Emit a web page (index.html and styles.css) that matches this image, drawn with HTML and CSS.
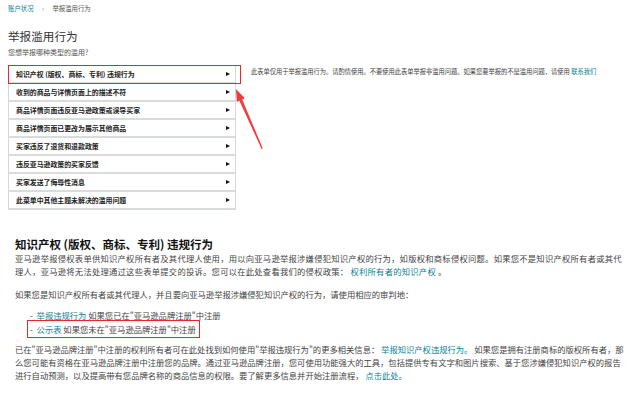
FILE: index.html
```html
<!DOCTYPE html>
<html lang="zh-CN">
<head>
  <meta charset="UTF-8" />
  <title>举报滥用行为</title>
  <link rel="stylesheet" href="styles.css">
</head>
<body>
  <div class="crumbs">
    <a href="#">账户状况</a>
    <span class="sep">›</span>
    <span>举报滥用行为</span>
  </div>

  <h1 class="title">举报滥用行为</h1>
  <div class="sub">您想举报哪种类型的滥用?</div>

  <div class="top">
    <div class="menu">
      <div class="row active">知识产权 (版权、商标、专利) 违规行为<i class="tri"></i></div>
      <div class="row">收到的商品与详情页面上的描述不符<i class="tri"></i></div>
      <div class="row">商品详情页面违反亚马逊政策或误导买家<i class="tri"></i></div>
      <div class="row">商品详情页面已更改为展示其他商品<i class="tri"></i></div>
      <div class="row">买家违反了退货和退款政策<i class="tri"></i></div>
      <div class="row">违反亚马逊政策的买家反馈<i class="tri"></i></div>
      <div class="row">买家发送了侮辱性消息<i class="tri"></i></div>
      <div class="row">此菜单中其他主题未解决的滥用问题<i class="tri"></i></div>
    </div>
    <div class="note">此表单仅用于举报滥用行为。请酌情使用。不要使用此表单举报非滥用问题。如果您要举报的不是滥用问题，请使用 <a href="#">联系我们</a></div>
  </div>

  <!-- annotation arrow -->
  <svg class="arrow" width="40" height="70" viewBox="0 0 40 70">
    <polygon points="6,4 14.8,13.2 12.2,14.6 32.8,63.5 31.6,64 9.4,15.8 6.8,17" fill="#f23b3b"/>
  </svg>

  <div class="section">
    <h2>知识产权 (版权、商标、专利) 违规行为</h2>
    <p class="intro">亚马逊举报侵权表单供知识产权所有者及其代理人使用，用以向亚马逊举报涉嫌侵犯知识产权的行为，如版权和商标侵权问题。如果您不是知识产权所有者或其代理人，亚马逊将无法处理通过这些表单提交的投诉。您可以在此处查看我们的侵权政策： <a href="#">权利所有者的知识产权</a> 。</p>
    <p class="gap">如果您是知识产权所有者或其代理人，并且要向亚马逊举报涉嫌侵犯知识产权的行为，请使用相应的审判地：</p>
    <ul>
      <li>-&nbsp; <a href="#">举报违规行为</a> 如果您已在"亚马逊品牌注册"中注册</li>
      <li><span class="mark">-&nbsp; <a href="#">公示表</a> 如果您未在"亚马逊品牌注册"中注册</span></li>
    </ul>
    <p>已在"亚马逊品牌注册"中注册的权利所有者可在此处找到如何使用"举报违规行为"的更多相关信息： <a href="#">举报知识产权违规行为。</a> 如果您是拥有注册商标的版权所有者，那么您可能有资格在亚马逊品牌注册中注册您的品牌。通过亚马逊品牌注册，您可使用功能强大的工具，包括提供专有文字和图片搜索、基于您涉嫌侵犯知识产权的报告进行自动预测，以及提高带有您品牌名称的商品信息的权限。要了解更多信息并开始注册流程， <a href="#">点击此处。</a></p>
  </div>
</body>
</html>
```

FILE: styles.css
```css
body {
  margin: 0;
  background: #fff;
  color: #444;
  font-family: "Noto Sans CJK SC", "Noto Sans", sans-serif;
  position: relative;
}

a {
  color: #0a8297;
  text-decoration: none;
}

.crumbs {
  padding: 4px 8px 0;
  font-size: 6.4px;
  line-height: 10px;
  color: #555;
}

.crumbs .sep {
  margin: 0 7px;
  color: #666;
}

.title {
  margin: 14px 8px 0;
  font-size: 11.6px;
  line-height: 16px;
  font-weight: normal;
  color: #333;
}

.sub {
  margin: 3px 8px 0;
  font-size: 7px;
  line-height: 10px;
  color: #555;
}

.top {
  display: flex;
  gap: 15px;
  margin: 8px 8px 0;
}

.menu {
  box-sizing: border-box;
  width: 228px;
  flex-shrink: 0;
  border: 1px solid #d5d9d9;
  border-bottom: none;
}

.row {
  position: relative;
  display: flex;
  align-items: center;
  justify-content: space-between;
  height: 16px;
  padding: 0 5px 0 7px;
  border-bottom: 2px solid #d8dcdc;
  font-size: 6.9px;
  font-weight: bold;
  color: #222;
}

.row.active::after {
  content: "";
  position: absolute;
  left: -1px;
  right: -6px;
  top: -1px;
  bottom: -2px;
  border: 1.5px solid #e8262b;
}

.tri {
  width: 0;
  height: 0;
  border-left: 4px solid #111;
  border-top: 2.5px solid transparent;
  border-bottom: 2.5px solid transparent;
}

.note {
  padding-top: 2px;
  font-size: 6.25px;
  line-height: 10px;
  color: #444;
}

.arrow {
  position: absolute;
  left: 230px;
  top: 85px;
}

.section {
  padding: 0 15px;
  margin-top: 26px;
}

h2 {
  margin: 0;
  font-size: 11.5px;
  line-height: 16px;
  font-weight: bold;
  color: #111;
}

p {
  margin: 0;
  font-size: 8.3px;
  line-height: 13px;
}

p.intro {
  letter-spacing: 0.25px;
}

p.gap {
  margin: 9.5px 0 7px;
}

ul {
  list-style: none;
  margin: 0 0 7.5px;
  padding-left: 15px;
}

li {
  font-size: 8.3px;
  line-height: 14px;
}

.mark {
  outline: 1.5px solid #e8262b;
  outline-offset: 2px;
  padding-right: 1px;
}
```
